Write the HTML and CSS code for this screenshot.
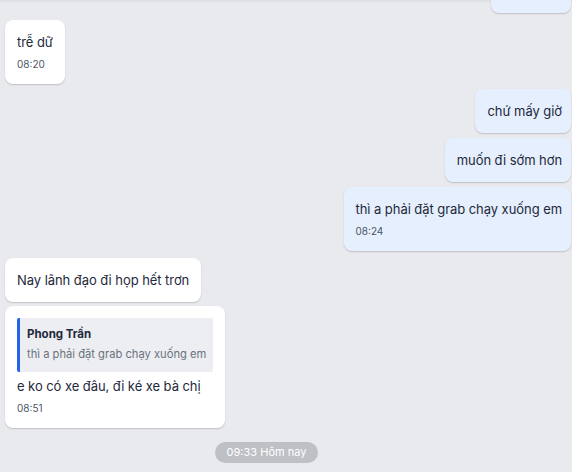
FILE: index.html
```html
<!DOCTYPE html>
<html lang="vi">
<head>
<meta charset="utf-8">
<link rel="stylesheet" href="styles.css">
</head>
<body>
<div class="chat">
  <div class="row out first"><div class="bubble out-b"><div class="text">ok anh ơi!</div><div class="time">08:19</div></div></div>
  <div class="row in gap"><div class="bubble in-b"><div class="text">trễ dữ</div><div class="time">08:20</div></div></div>
  <div class="row out gap-m"><div class="bubble out-b"><div class="text">chứ mấy giờ</div></div></div>
  <div class="row out gap-m"><div class="bubble out-b"><div class="text">muốn đi sớm hơn</div></div></div>
  <div class="row out gap-m"><div class="bubble out-b"><div class="text">thì a phải đặt grab chạy xuống em</div><div class="time">08:24</div></div></div>
  <div class="row in gap"><div class="bubble in-b"><div class="text">Nay lãnh đạo đi họp hết trơn</div></div></div>
  <div class="row in gap-s">
    <div class="bubble in-b">
      <div class="quote">
        <div class="q-name">Phong Trần</div>
        <div class="q-text">thì a phải đặt grab chạy xuống em</div>
      </div>
      <div class="text">e ko có xe đâu, đi ké xe bà chị</div>
      <div class="time">08:51</div>
    </div>
  </div>
  <div class="divider"><span class="pill">09:33 Hôm nay</span></div>
</div>
</body>
</html>
```
FILE: styles.css
```css
* { box-sizing: border-box; }
html, body { margin: 0; padding: 0; }
body {
  width: 572px;
  height: 472px;
  overflow: hidden;
  background: #e9eaee;
  font-family: Inter, "Noto Sans", sans-serif;
  color: #1e293b;
}
.chat {
  border-top: 2px solid #dfe0e3;
  display: flex;
  flex-direction: column;
  padding: 0 1px 0 5px;
}
.row { display: flex; }
.row.in { justify-content: flex-start; }
.row.out { justify-content: flex-end; }
.row.first { margin-top: -53px; }
.gap { margin-top: 7px; }
.gap-m { margin-top: 5px; }
.gap-s { margin-top: 4px; }
.bubble {
  border-radius: 8px;
  padding: 12px;
  box-shadow: 0 1px 1.5px rgba(0, 0, 0, 0.18);
}
.in-b { background: #ffffff; }
.out-b { background: #e5effd; padding-right: 9px; }
.text {
  font-size: 13px;
  line-height: 20px;
  letter-spacing: -0.06px;
  white-space: nowrap;
}
.time {
  font-size: 10px;
  line-height: 16px;
  margin-top: 4px;
  color: #4b5563;
}
.quote {
  background: #eceef1;
  border-left: 3px solid #2563eb;
  border-radius: 2px;
  padding: 7px 7px 9px 7px;
  margin-bottom: 4px;
}
.q-name {
  font-size: 11.5px;
  font-weight: 700;
  line-height: 18px;
  color: #1e293b;
}
.q-text {
  font-size: 11.2px;
  line-height: 18px;
  margin-top: 2px;
  color: #6b7280;
  white-space: nowrap;
}
.divider {
  display: flex;
  justify-content: center;
  padding-right: 43px;
  margin-top: 14px;
}
.pill {
  background: #bec0c5;
  color: #ffffff;
  font-size: 11px;
  line-height: 21px;
  padding: 0 12px;
  border-radius: 11px;
}
```
